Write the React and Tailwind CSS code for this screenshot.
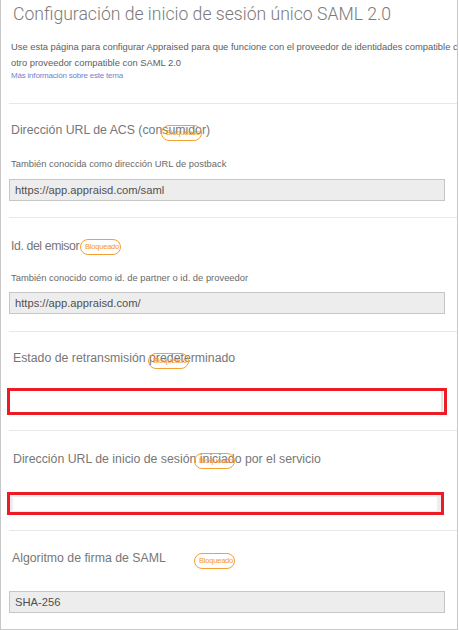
import React from "react";

// badge that sits on top of the field title
function Locked({ left, top }) {
  return (
    <span
      className="absolute h-[16px] rounded-full border border-[#f5a033] text-[#f39a2a] text-[7.5px] leading-[14px] pl-[4px] pr-[1px] whitespace-nowrap tracking-[-0.2px]"
      style={{ left, top }}
    >
      Bloqueado
    </span>
  );
}

function Sep() {
  return <div className="ml-2 border-t border-[#e8e8e8]" />;
}

function ReadOnly({ value, className = "" }) {
  return (
    <div
      className={
        "ml-2 w-[436px] h-[22px] border border-[#c6c6c6] bg-[#ededed] pl-[5px] text-[11.2px] leading-[20px] text-[#505050]" +
        " " +
        className
      }
    >
      {value}
    </div>
  );
}

export default function App() {
  return (
    <div
      className="w-[458px] h-[630px] overflow-hidden border-l border-r border-b border-[#c8c8c8] bg-white text-[#777]"
      style={{ fontFamily: "'Liberation Sans', Arial, sans-serif" }}
    >
      {/* header */}
      <div className="h-[103px] pl-[12px] pt-[3px]">
        <h1
          className="text-[17.6px] leading-[22px] text-[#7a7a7a] whitespace-nowrap"
          style={{ fontFamily: "Roboto, 'Liberation Sans', sans-serif", fontWeight: 300 }}
        >
          Configuración de inicio de sesión único SAML 2.0
        </h1>
        <div className="mt-[14px] text-[9.4px] leading-[16px] text-[#5e5e5e] whitespace-nowrap -ml-[2px]">
          <div>Use esta página para configurar Appraised para que funcione con el proveedor de identidades compatible con</div>
          <div>otro proveedor compatible con SAML 2.0</div>
        </div>
        <div className="-ml-[2px] text-[8px] leading-[10px] text-[#7183d0] tracking-[-0.2px]">
          Más información sobre este tema
        </div>
      </div>
      <Sep />

      {/* ACS */}
      <div className="relative h-[113px] pt-[18px]">
        <div className="pl-[10px] text-[12.3px] leading-[16px] whitespace-nowrap">Dirección URL de ACS (consumidor)</div>
        <Locked left={160} top={21} />
        <div className="pl-[10px] mt-[19px] text-[9.4px] leading-[14px] text-[#6a6a6a]">
          También conocida como dirección URL de postback
        </div>
        <ReadOnly value="https://app.appraisd.com/saml" className="mt-[8px]" />
      </div>
      <Sep />

      {/* issuer */}
      <div className="relative h-[113px] pt-[20px]">
        <div className="pl-[10px] text-[12.3px] leading-[16px] tracking-[-0.4px]">Id. del emisor</div>
        <Locked left={79} top={21} />
        <div className="pl-[10px] mt-[17px] text-[9.4px] leading-[14px] text-[#6a6a6a]">
          También conocido como id. de partner o id. de proveedor
        </div>
        <ReadOnly value="https://app.appraisd.com/" className="mt-[7px]" />
      </div>
      <Sep />

      {/* relay state */}
      <div className="relative h-[98px] pt-[18px]">
        <div className="pl-[12px] text-[12.3px] leading-[16px] whitespace-nowrap">Estado de retransmisión predeterminado</div>
        <Locked left={147} top={21} />
        <div className="ml-[6px] mt-[22px] w-[440px] h-[27px] border-[3px] border-[#ed1c24] bg-white">
          <div className="ml-auto w-[2px] h-full bg-[#e3e3e3] mr-[1px]" />
        </div>
      </div>
      <Sep />

      {/* sign-on url */}
      <div className="relative h-[99px] pt-[20px]">
        <div className="pl-[12px] text-[12.3px] leading-[16px] whitespace-nowrap">
          Dirección URL de inicio de sesión iniciado por el servicio
        </div>
        <Locked left={193} top={22} />
        <div className="ml-[6px] mt-[25px] w-[437px] h-[23px] border-[3px] border-[#ed1c24] bg-[#eeeeee] pt-[2px] pl-[3px] pr-[4px]">
          <div className="h-[14px] bg-white" />
        </div>
      </div>
      <Sep />

      {/* algorithm */}
      <div className="relative pt-[19px]">
        <div className="pl-[11px] text-[12.3px] leading-[16px]">Algoritmo de firma de SAML</div>
        <Locked left={193} top={22} />
        <ReadOnly value="SHA-256" className="mt-[25px]" />
      </div>
    </div>
  );
}
